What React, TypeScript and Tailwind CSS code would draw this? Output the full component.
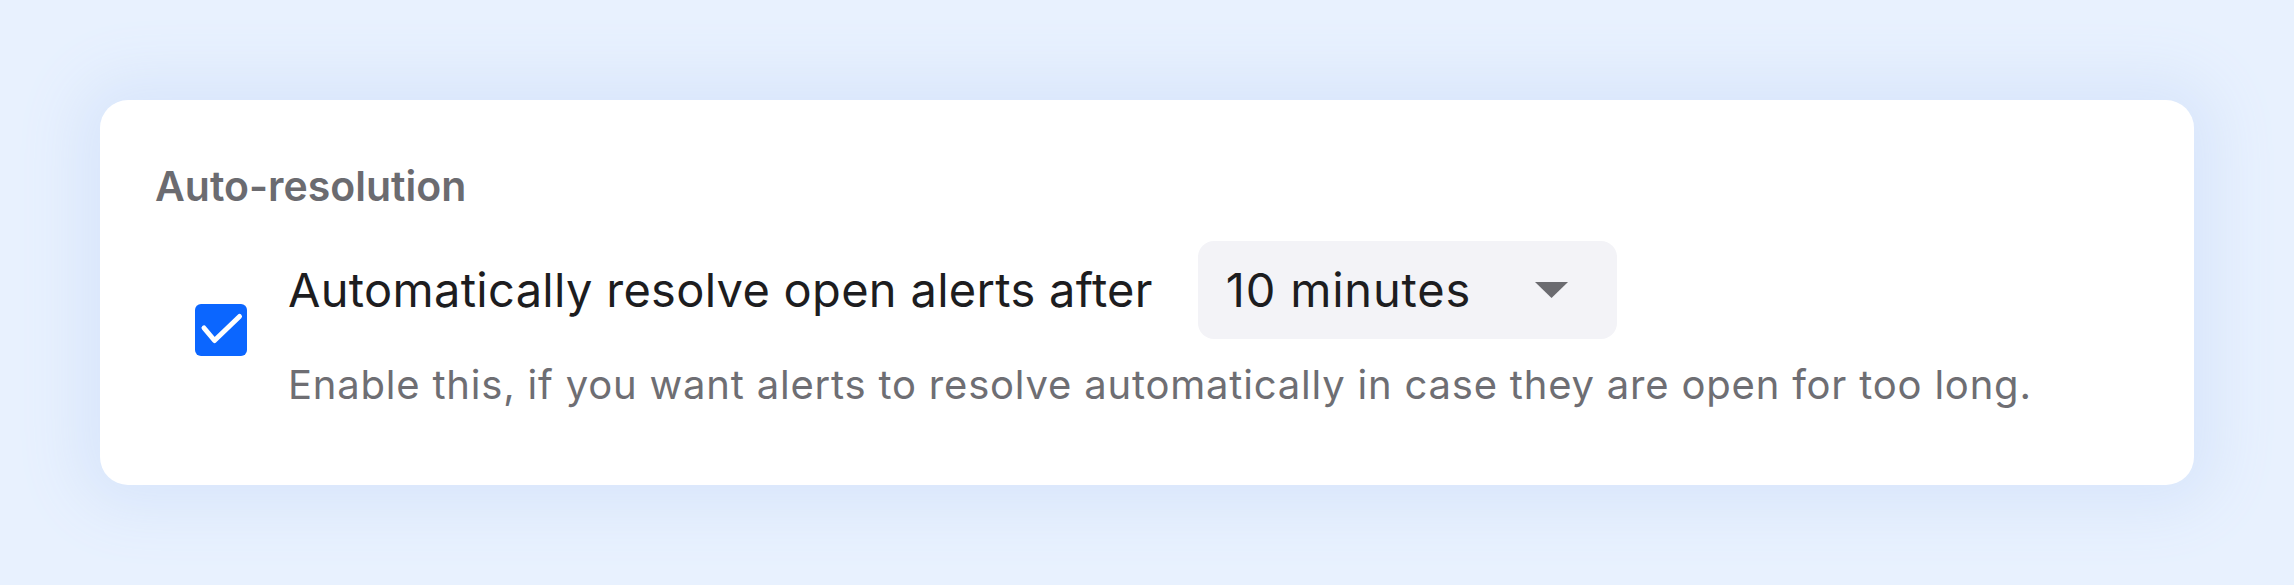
import { useState } from "react";

function Checkbox({ checked, onChange }: { checked: boolean; onChange: () => void }) {
  return (
    <button
      type="button"
      onClick={onChange}
      className={`mt-[63px] flex size-[52px] shrink-0 items-center justify-center rounded-[6px] ${
        checked ? "bg-[#0b66ff]" : "border-2 border-[#c7c7cc] bg-white"
      }`}
    >
      {checked && (
        <svg viewBox="0 0 52 52" className="size-[52px]" fill="none">
          <path
            d="M9 24 L19.5 36.5 L44.5 12.5"
            stroke="white"
            strokeWidth="5"
            strokeLinecap="round"
            strokeLinejoin="round"
          />
        </svg>
      )}
    </button>
  );
}

function Select() {
  return (
    <div className="flex h-[98px] w-[419px] items-center justify-between rounded-[16px] bg-[#f3f3f7] pl-[28px] pr-[49px]">
      <span className="text-[47px] leading-[54px] tracking-[0.8px] text-[#1d1d1f]">10 minutes</span>
      <svg viewBox="0 0 33 16" className="h-[16px] w-[33px]">
        <path d="M0 0 H33 L16.5 16 Z" fill="#6b6b70" />
      </svg>
    </div>
  );
}

export default function App() {
  const [checked, setChecked] = useState(true);

  return (
    <div
      className="flex h-[585px] w-full bg-[#e8f1fe] p-[100px]"
      style={{ fontFamily: "Inter, 'Noto Sans', sans-serif" }}
    >
      <div className="flex flex-1 flex-col rounded-[28px] bg-white pl-[55px] pt-[62px] shadow-[0_0_60px_24px_#d9e6fb]">
        <h2 className="text-[41px] font-semibold leading-[48px] text-[#6b6b70]">Auto-resolution</h2>

        <div className="mt-[31px] flex items-start gap-[41px] pl-[40px]">
          <Checkbox checked={checked} onChange={() => setChecked(!checked)} />
          <div className="flex flex-col">
            <div className="flex items-center gap-[45px]">
              <span className="text-[47px] leading-[54px] tracking-[0.3px] text-[#1d1d1f]">
                Automatically resolve open alerts after
              </span>
              <Select />
            </div>
            <p className="mt-[22px] text-[40px] leading-[47px] tracking-[0.8px] text-[#6e6e73]">
              Enable this, if you want alerts to resolve automatically in case they are open for too long.
            </p>
          </div>
        </div>
      </div>
    </div>
  );
}
